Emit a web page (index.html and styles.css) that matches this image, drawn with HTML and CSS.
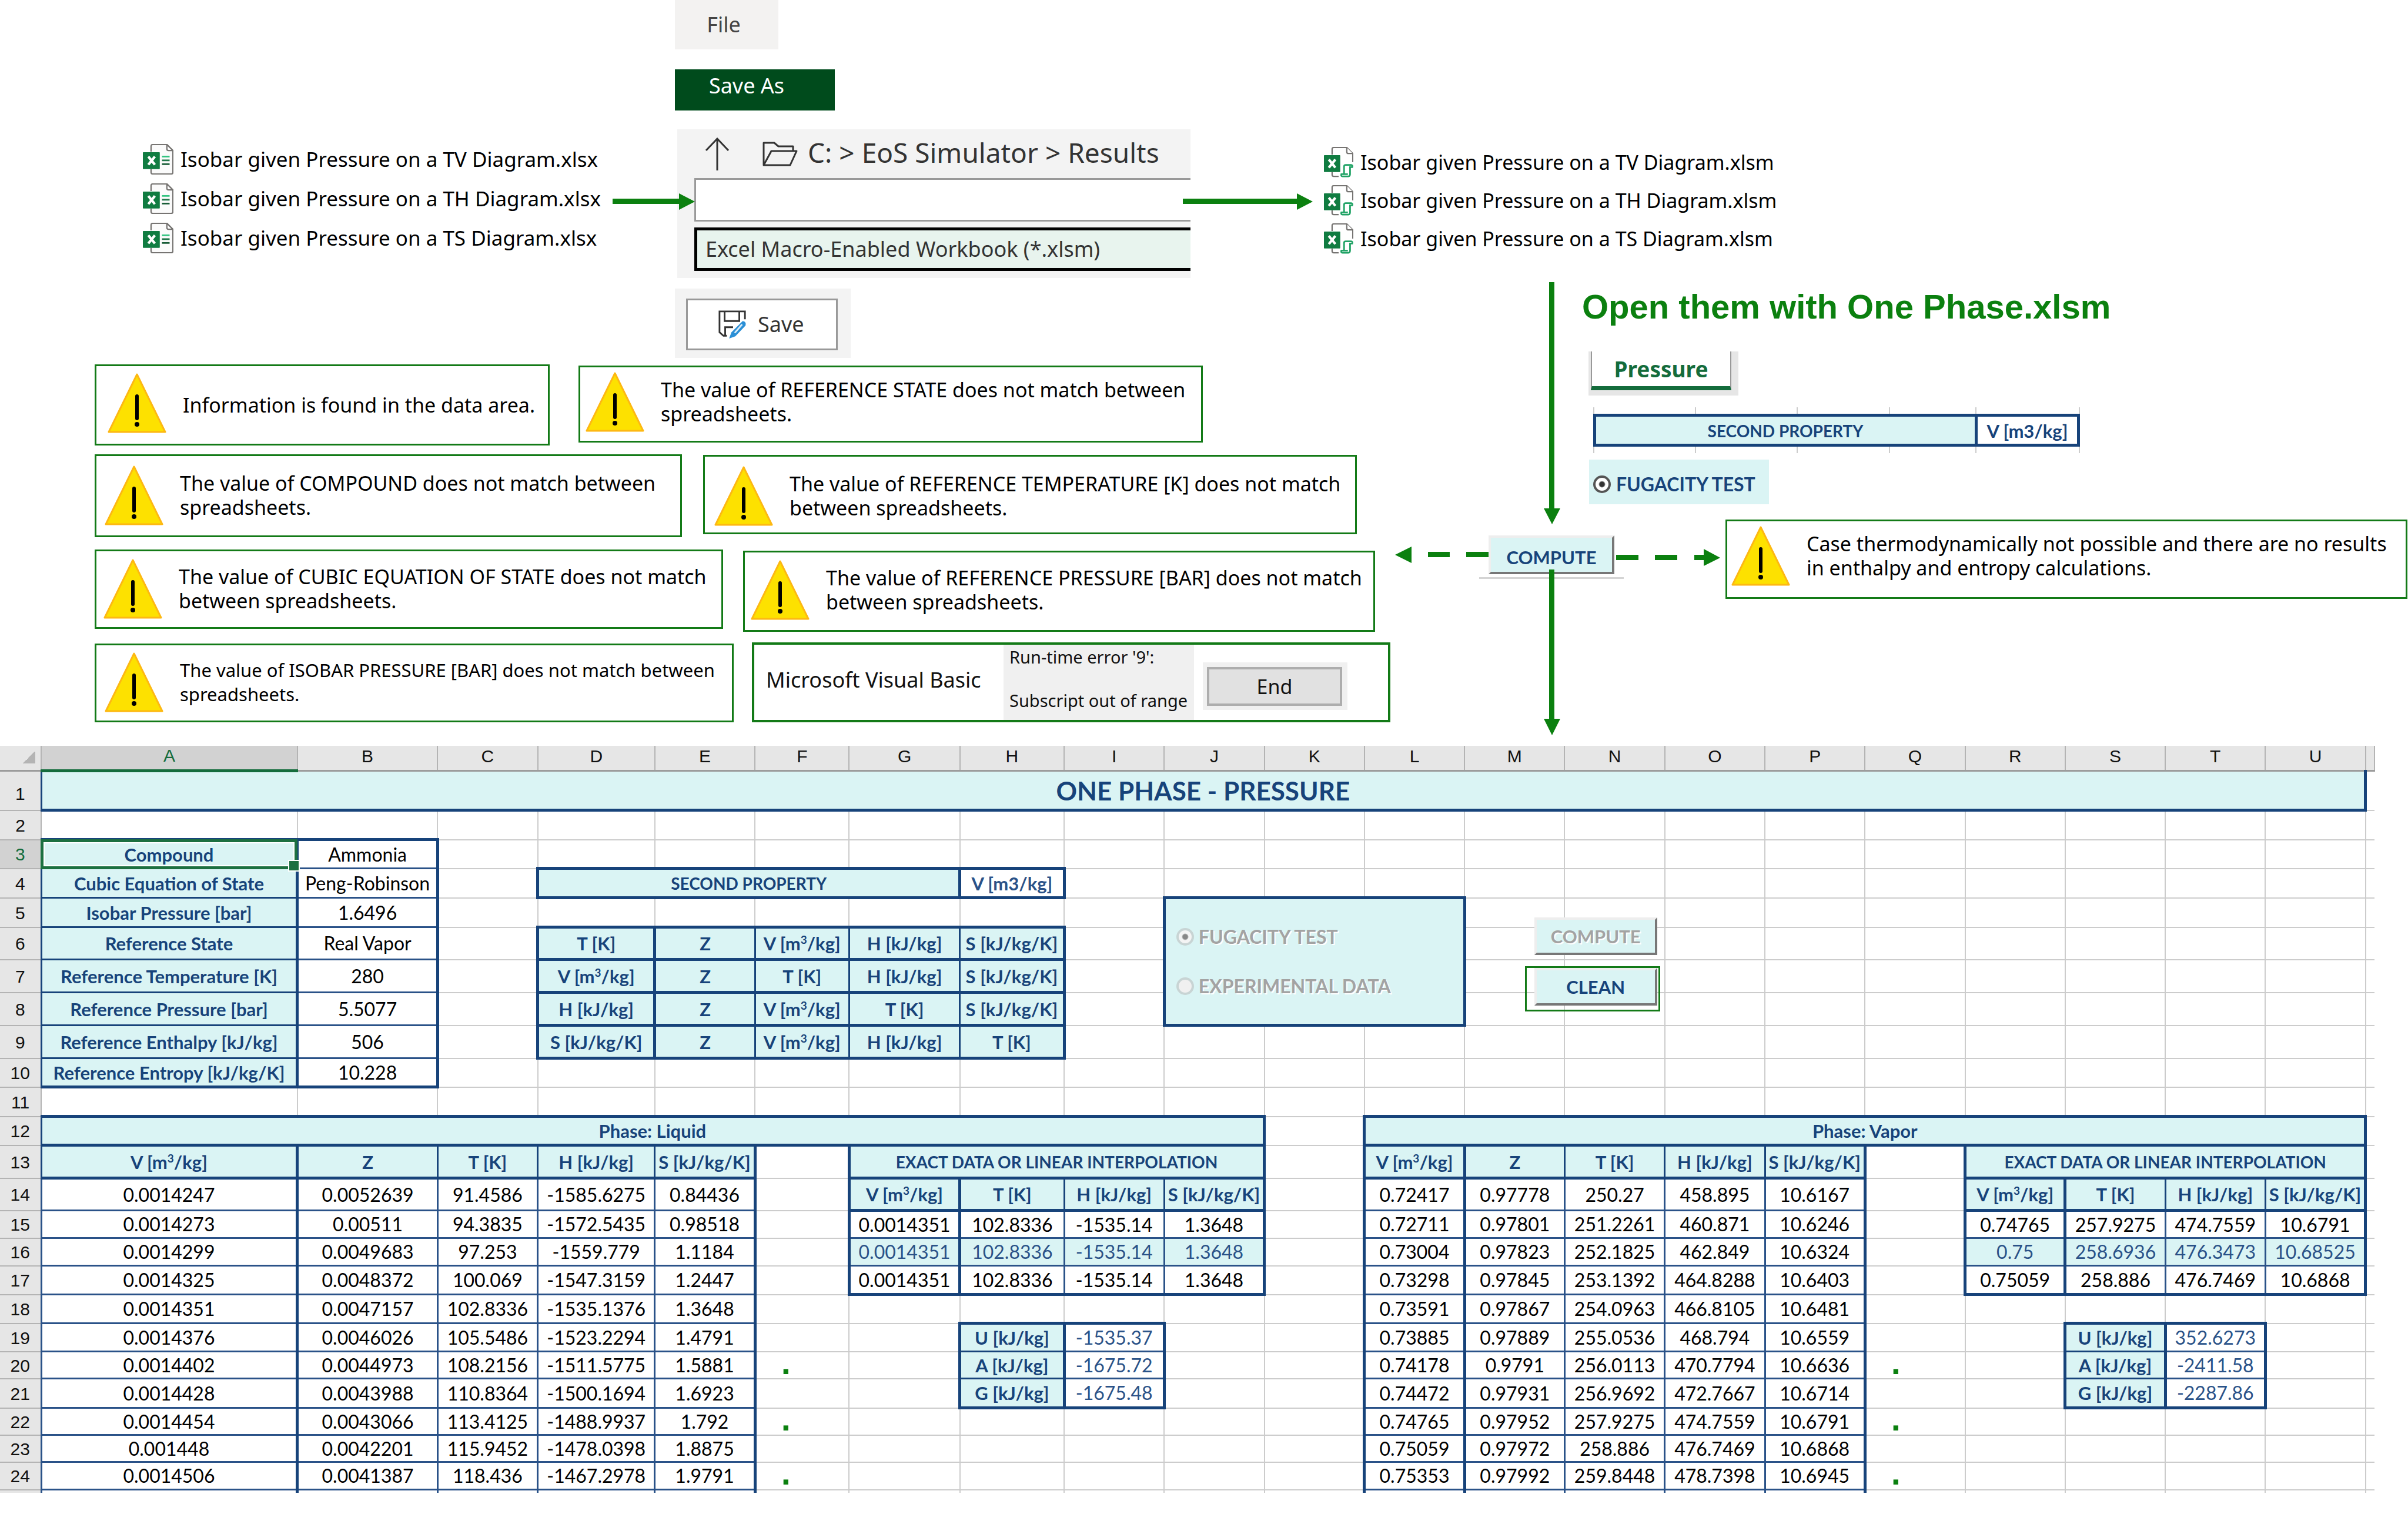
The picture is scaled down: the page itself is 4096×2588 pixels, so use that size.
FILE: index.html
```html
<!DOCTYPE html>
<html lang="en">
<head>
<meta charset="utf-8">
<title>One Phase - Pressure</title>
<link rel="stylesheet" href="styles.css">
</head>
<body>
<svg class="defs" aria-hidden="true">
  <symbol id="warning" viewBox="0 0 100 102">
    <path d="M50 2 L98 100 H2 Z" fill="#fde100" stroke="#fdb813" stroke-width="3" stroke-linejoin="round"/>
    <path d="M50 39 V77" stroke="#000" stroke-width="6" stroke-linecap="round"/>
    <circle cx="50" cy="87" r="4" fill="#000"/>
  </symbol>
  <symbol id="xlsx" viewBox="0 0 56 56">
    <path d="M15 14 V4 Q15 1 18 1 H44 L55 12 V52 Q55 55 52 55 H18 Q15 55 15 52 V46" fill="#fbfbfb" stroke="#767472" stroke-width="2.4"/>
    <path d="M44 1 V9 Q44 12 47 12 H55 Z" fill="#fff" stroke="#767472" stroke-width="2.4"/>
    <path d="M35 23 H49" stroke="#33c481" stroke-width="3"/>
    <path d="M35 30 H49" stroke="#21774a" stroke-width="3"/>
    <path d="M35 37 H49" stroke="#185c37" stroke-width="3"/>
    <rect x="0" y="15" width="31" height="31" rx="1" fill="#107c41"/>
    <path d="M10 23 L22 38 M22 23 L10 38" stroke="#fff" stroke-width="4.6"/>
  </symbol>
  <symbol id="xlsm" viewBox="0 0 54 56">
    <path d="M15 14 V4 Q15 1 18 1 H42 L53 12 V28 M15 46 V51 Q15 54 18 54 H27" fill="none" stroke="#767472" stroke-width="2.4"/>
    <path d="M42 1 V9 Q42 12 45 12 H53" fill="#fff" stroke="#767472" stroke-width="2.4"/>
    <rect x="0" y="15" width="30" height="31" rx="1" fill="#107c41"/>
    <path d="M9 23 L21 38 M21 23 L9 38" stroke="#fff" stroke-width="4.6"/>
    <path d="M37 50 V36 Q37 33 40 33 H50 Q53 33 52 37 H48 V50 Q48 54 45 54 H34 Q31 54 32 50 H44" fill="#fff" stroke="#21a366" stroke-width="3"/>
  </symbol>
</svg>

<main>
<section class="flow" aria-label="Workflow">
  <ul class="files files-in">
    <li><svg><use href="#xlsx"/></svg>Isobar given Pressure on a TV Diagram.xlsx</li>
    <li><svg><use href="#xlsx"/></svg>Isobar given Pressure on a TH Diagram.xlsx</li>
    <li><svg><use href="#xlsx"/></svg>Isobar given Pressure on a TS Diagram.xlsx</li>
  </ul>

  <button class="menu-file" type="button">File</button>
  <button class="menu-save-as" type="button">Save As</button>

  <form class="dialog">
    <div class="path">
      <svg class="up" viewBox="0 0 42 56"><path d="M21 56 V2 M2 22 L21 2 L40 22" fill="none" stroke="#333" stroke-width="3"/></svg>
      <svg class="folder" viewBox="0 0 60 42"><path d="M2 40 V2 H20 L27 8 H52 V16 M2 40 L15 16 H58 L47 40 Z" fill="none" stroke="#333" stroke-width="3" stroke-linejoin="round"/></svg>
      <span>C: &gt; EoS Simulator &gt; Results</span>
    </div>
    <input type="text" class="file-name" aria-label="File name">
    <select class="file-type" aria-label="File type"><option>Excel Macro-Enabled Workbook (*.xlsm)</option></select>
  </form>

  <div class="save-panel">
    <button type="button" class="save">
      <svg viewBox="0 0 52 52"><path d="M16 46 H10 L3 40 V3 H48 V17 M12 3 V20 H38 V3 M13 46 V31 H27" fill="none" stroke="#333" stroke-width="3"/><path d="M44 20 Q51 21 49 28 L31 47 L20 51 L24 40 Z" fill="#2b8fd6"/><path d="M43 26 L30 41" stroke="#d9ecf8" stroke-width="3"/></svg>
      Save
    </button>
  </div>

  <ul class="files files-out">
    <li><svg><use href="#xlsm"/></svg>Isobar given Pressure on a TV Diagram.xlsm</li>
    <li><svg><use href="#xlsm"/></svg>Isobar given Pressure on a TH Diagram.xlsm</li>
    <li><svg><use href="#xlsm"/></svg>Isobar given Pressure on a TS Diagram.xlsm</li>
  </ul>

  <h1 class="open-with">Open them with One Phase.xlsm</h1>

  <div class="sheet-tab"><button type="button">Pressure</button></div>

  <div class="property">
    <span></span><span></span><span></span><span></span><span></span>
    <div class="property-bar"><b>SECOND PROPERTY</b><b class="unit">V [m3/kg]</b></div>
  </div>

  <label class="chip"><input type="radio" name="mode" checked>FUGACITY TEST</label>

  <div class="compute-node"><button type="button" class="bevel">COMPUTE</button></div>

  <div class="warn w-data"><svg><use href="#warning"/></svg><p>Information is found in the data area.</p></div>
  <div class="warn w-state"><svg><use href="#warning"/></svg><p>The value of REFERENCE STATE does not match between<br>spreadsheets.</p></div>
  <div class="warn w-compound"><svg><use href="#warning"/></svg><p>The value of COMPOUND does not match between<br>spreadsheets.</p></div>
  <div class="warn w-temp"><svg><use href="#warning"/></svg><p>The value of REFERENCE TEMPERATURE [K] does not match<br>between spreadsheets.</p></div>
  <div class="warn w-eos"><svg><use href="#warning"/></svg><p>The value of CUBIC EQUATION OF STATE does not match<br>between spreadsheets.</p></div>
  <div class="warn w-press"><svg><use href="#warning"/></svg><p>The value of REFERENCE PRESSURE [BAR] does not match<br>between spreadsheets.</p></div>
  <div class="warn w-isobar"><svg><use href="#warning"/></svg><p>The value of ISOBAR PRESSURE [BAR] does not match between<br>spreadsheets.</p></div>
  <div class="warn w-case"><svg><use href="#warning"/></svg><p>Case thermodynamically not possible and there are no results<br>in enthalpy and entropy calculations.</p></div>

  <div class="runtime">
    <span class="product">Microsoft Visual Basic</span>
    <div class="message"><span>Run-time error '9':</span><span>Subscript out of range</span></div>
    <div class="end"><button type="button">End</button></div>
  </div>

  <svg class="arrows" aria-hidden="true" fill="#0b800f">
    <path d="M1042 338 H1156 V347 H1042 Z M1155 329 L1182 343 L1155 357 Z"/>
    <path d="M2012 338 H2207 V347 H2012 Z M2206 329 L2233 343 L2206 357 Z"/>
    <path d="M2635 480 H2644 V866 H2635 Z M2626 865 H2654 L2640 892 Z"/>
    <path d="M2635 969 H2644 V1224 H2635 Z M2626 1223 H2654 L2640 1251 Z"/>
    <path d="M2373 944 L2401 930 V958 Z M2429 939 H2466 V948 H2429 Z M2494 939 H2532 V948 H2494 Z"/>
    <path d="M2749 944 H2787 V953 H2749 Z M2815 944 H2853 V953 H2815 Z M2882 944 H2898 V934 L2926 949 L2898 963 V953 H2882 Z"/>
  </svg>
</section>

<table class="sheet">
<colgroup>
<col class="c-num"><col class="c-a"><col class="c-b"><col class="c-c"><col class="c-d"><col class="c-e"><col class="c-f"><col class="c-g"><col class="c-h"><col span="13" class="c-std"><col class="c-tail">
</colgroup>
<thead>
<tr><th class="corner"></th><th class="on">A</th><th>B</th><th>C</th><th>D</th><th>E</th><th>F</th><th>G</th><th>H</th><th>I</th><th>J</th><th>K</th><th>L</th><th>M</th><th>N</th><th>O</th><th>P</th><th>Q</th><th>R</th><th>S</th><th>T</th><th>U</th><th></th></tr>
</thead>
<tbody>
<tr class="r67"><th>1</th><td colspan="21" class="h title B R">ONE PHASE - PRESSURE</td><td></td></tr>
<tr class="r50"><th>2</th><td></td><td></td><td></td><td></td><td></td><td></td><td></td><td></td><td></td><td></td><td></td><td></td><td></td><td></td><td></td><td></td><td></td><td></td><td></td><td></td><td></td><td></td></tr>
<tr class="r49"><th class="on">3</th><td class="h T R picked">Compound<i class="cursor"></i></td><td class="d T R">Ammonia</td><td></td><td></td><td></td><td></td><td></td><td></td><td></td><td></td><td></td><td></td><td></td><td></td><td></td><td></td><td></td><td></td><td></td><td></td><td></td><td></td></tr>
<tr class="r50"><th>4</th><td class="h R">Cubic Equation of State</td><td class="d R">Peng-Robinson</td><td></td><td colspan="4" class="h caps T R B L">SECOND PROPERTY</td><td class="d n m T R B">V [m3/kg]</td><td></td><td></td><td></td><td></td><td></td><td></td><td></td><td></td><td></td><td></td><td></td><td></td><td></td><td></td></tr>
<tr class="r50"><th>5</th><td class="h R">Isobar Pressure [bar]</td><td class="d R">1.6496</td><td></td><td></td><td></td><td></td><td></td><td></td><td></td>
<td colspan="3" rowspan="4" class="h T R B L"><div class="modes"><label><input type="radio" name="sheet-mode" checked disabled>FUGACITY TEST</label><label><input type="radio" name="sheet-mode" disabled>EXPERIMENTAL DATA</label></div></td>
<td class="anchor"><div class="actions"><button type="button" class="bevel" disabled>COMPUTE</button><span class="ring"><button type="button" class="bevel">CLEAN</button></span></div></td><td></td><td></td><td></td><td></td><td></td><td></td><td></td><td></td><td></td></tr>
<tr class="r55"><th>6</th><td class="h R">Reference State</td><td class="d R">Real Vapor</td><td></td><td class="h T R B L">T [K]</td><td class="h T B">Z</td><td class="h T B">V [m<sup>3</sup>/kg]</td><td class="h T B">H [kJ/kg]</td><td class="h T R B">S [kJ/kg/K]</td><td></td><td></td><td></td><td></td><td></td><td></td><td></td><td></td><td></td><td></td><td></td></tr>
<tr class="r56"><th>7</th><td class="h R">Reference Temperature [K]</td><td class="d R">280</td><td></td><td class="h R B L">V [m<sup>3</sup>/kg]</td><td class="h B">Z</td><td class="h B">T [K]</td><td class="h B">H [kJ/kg]</td><td class="h R B">S [kJ/kg/K]</td><td></td><td></td><td></td><td></td><td></td><td></td><td></td><td></td><td></td><td></td><td></td></tr>
<tr class="r56"><th>8</th><td class="h R">Reference Pressure [bar]</td><td class="d R">5.5077</td><td></td><td class="h R B L">H [kJ/kg]</td><td class="h B">Z</td><td class="h B">V [m<sup>3</sup>/kg]</td><td class="h B">T [K]</td><td class="h R B">S [kJ/kg/K]</td><td></td><td></td><td></td><td></td><td></td><td></td><td></td><td></td><td></td><td></td><td></td></tr>
<tr class="r56"><th>9</th><td class="h R">Reference Enthalpy [kJ/kg]</td><td class="d R">506</td><td></td><td class="h R B L">S [kJ/kg/K]</td><td class="h B">Z</td><td class="h B">V [m<sup>3</sup>/kg]</td><td class="h B">H [kJ/kg]</td><td class="h R B">T [K]</td><td></td><td></td><td></td><td></td><td></td><td></td><td></td><td></td><td></td><td></td><td></td><td></td><td></td><td></td></tr>
<tr class="r49"><th>10</th><td class="h R B">Reference Entropy [kJ/kg/K]</td><td class="d R B">10.228</td><td></td><td></td><td></td><td></td><td></td><td></td><td></td><td></td><td></td><td></td><td></td><td></td><td></td><td></td><td></td><td></td><td></td><td></td><td></td><td></td></tr>
<tr class="r50"><th>11</th><td></td><td></td><td></td><td></td><td></td><td></td><td></td><td></td><td></td><td></td><td></td><td></td><td></td><td></td><td></td><td></td><td></td><td></td><td></td><td></td><td></td><td></td></tr>
<tr class="r49"><th>12</th><td colspan="10" class="h T R B">Phase: Liquid</td><td></td><td colspan="10" class="h T R B L">Phase: Vapor</td><td></td></tr>
<tr class="r56"><th>13</th><td class="h R B">V [m<sup>3</sup>/kg]</td><td class="h B">Z</td><td class="h B">T [K]</td><td class="h B">H [kJ/kg]</td><td class="h R B">S [kJ/kg/K]</td><td></td><td colspan="4" class="h caps R B L">EXACT DATA OR LINEAR INTERPOLATION</td><td></td><td class="h R B L">V [m<sup>3</sup>/kg]</td><td class="h B">Z</td><td class="h B">T [K]</td><td class="h B">H [kJ/kg]</td><td class="h R B">S [kJ/kg/K]</td><td></td><td colspan="4" class="h caps R B L">EXACT DATA OR LINEAR INTERPOLATION</td><td></td></tr>
<tr class="r55"><th>14</th><td class="d R">0.0014247</td><td class="d">0.0052639</td><td class="d">91.4586</td><td class="d">-1585.6275</td><td class="d R">0.84436</td><td></td><td class="h R B L">V [m<sup>3</sup>/kg]</td><td class="h B">T [K]</td><td class="h B">H [kJ/kg]</td><td class="h R B">S [kJ/kg/K]</td><td></td><td class="d R L">0.72417</td><td class="d">0.97778</td><td class="d">250.27</td><td class="d">458.895</td><td class="d R">10.6167</td><td></td><td class="h R B L">V [m<sup>3</sup>/kg]</td><td class="h B">T [K]</td><td class="h B">H [kJ/kg]</td><td class="h R B">S [kJ/kg/K]</td><td></td></tr>
<tr class="r47"><th>15</th><td class="d R">0.0014273</td><td class="d">0.00511</td><td class="d">94.3835</td><td class="d">-1572.5435</td><td class="d R">0.98518</td><td></td><td class="d R L">0.0014351</td><td class="d">102.8336</td><td class="d">-1535.14</td><td class="d R">1.3648</td><td></td><td class="d R L">0.72711</td><td class="d">0.97801</td><td class="d">251.2261</td><td class="d">460.871</td><td class="d R">10.6246</td><td></td><td class="d R L">0.74765</td><td class="d">257.9275</td><td class="d">474.7559</td><td class="d R">10.6791</td><td></td></tr>
<tr class="r47"><th>16</th><td class="d R">0.0014299</td><td class="d">0.0049683</td><td class="d">97.253</td><td class="d">-1559.779</td><td class="d R">1.1184</td><td></td><td class="d n f R L">0.0014351</td><td class="d n f">102.8336</td><td class="d n f">-1535.14</td><td class="d n f R">1.3648</td><td></td><td class="d R L">0.73004</td><td class="d">0.97823</td><td class="d">252.1825</td><td class="d">462.849</td><td class="d R">10.6324</td><td></td><td class="d n f R L">0.75</td><td class="d n f">258.6936</td><td class="d n f">476.3473</td><td class="d n f R">10.68525</td><td></td></tr>
<tr class="r49"><th>17</th><td class="d R">0.0014325</td><td class="d">0.0048372</td><td class="d">100.069</td><td class="d">-1547.3159</td><td class="d R">1.2447</td><td></td><td class="d R B L">0.0014351</td><td class="d B">102.8336</td><td class="d B">-1535.14</td><td class="d R B">1.3648</td><td></td><td class="d R L">0.73298</td><td class="d">0.97845</td><td class="d">253.1392</td><td class="d">464.8288</td><td class="d R">10.6403</td><td></td><td class="d R B L">0.75059</td><td class="d B">258.886</td><td class="d B">476.7469</td><td class="d R B">10.6868</td><td></td></tr>
<tr class="r49"><th>18</th><td class="d R">0.0014351</td><td class="d">0.0047157</td><td class="d">102.8336</td><td class="d">-1535.1376</td><td class="d R">1.3648</td><td></td><td></td><td></td><td></td><td></td><td></td><td class="d R L">0.73591</td><td class="d">0.97867</td><td class="d">254.0963</td><td class="d">466.8105</td><td class="d R">10.6481</td><td></td><td></td><td></td><td></td><td></td><td></td></tr>
<tr class="r48"><th>19</th><td class="d R">0.0014376</td><td class="d">0.0046026</td><td class="d">105.5486</td><td class="d">-1523.2294</td><td class="d R">1.4791</td><td></td><td></td><td class="h T R L">U [kJ/kg]</td><td class="d n T R">-1535.37</td><td></td><td></td><td class="d R L">0.73885</td><td class="d">0.97889</td><td class="d">255.0536</td><td class="d">468.794</td><td class="d R">10.6559</td><td></td><td></td><td class="h T R L">U [kJ/kg]</td><td class="d n T R">352.6273</td><td></td><td></td></tr>
<tr class="r46"><th>20</th><td class="d R">0.0014402</td><td class="d">0.0044973</td><td class="d">108.2156</td><td class="d">-1511.5775</td><td class="d R">1.5881</td><td class="dot">.</td><td></td><td class="h R L">A [kJ/kg]</td><td class="d n R">-1675.72</td><td></td><td></td><td class="d R L">0.74178</td><td class="d">0.9791</td><td class="d">256.0113</td><td class="d">470.7794</td><td class="d R">10.6636</td><td class="dot">.</td><td></td><td class="h R L">A [kJ/kg]</td><td class="d n R">-2411.58</td><td></td><td></td></tr>
<tr class="r50"><th>21</th><td class="d R">0.0014428</td><td class="d">0.0043988</td><td class="d">110.8364</td><td class="d">-1500.1694</td><td class="d R">1.6923</td><td></td><td></td><td class="h R B L">G [kJ/kg]</td><td class="d n R B">-1675.48</td><td></td><td></td><td class="d R L">0.74472</td><td class="d">0.97931</td><td class="d">256.9692</td><td class="d">472.7667</td><td class="d R">10.6714</td><td></td><td></td><td class="h R B L">G [kJ/kg]</td><td class="d n R B">-2287.86</td><td></td><td></td></tr>
<tr class="r46"><th>22</th><td class="d R">0.0014454</td><td class="d">0.0043066</td><td class="d">113.4125</td><td class="d">-1488.9937</td><td class="d R">1.792</td><td class="dot">.</td><td></td><td></td><td></td><td></td><td></td><td class="d R L">0.74765</td><td class="d">0.97952</td><td class="d">257.9275</td><td class="d">474.7559</td><td class="d R">10.6791</td><td class="dot">.</td><td></td><td></td><td></td><td></td><td></td></tr>
<tr class="r46"><th>23</th><td class="d R">0.001448</td><td class="d">0.0042201</td><td class="d">115.9452</td><td class="d">-1478.0398</td><td class="d R">1.8875</td><td></td><td></td><td></td><td></td><td></td><td></td><td class="d R L">0.75059</td><td class="d">0.97972</td><td class="d">258.886</td><td class="d">476.7469</td><td class="d R">10.6868</td><td></td><td></td><td></td><td></td><td></td><td></td></tr>
<tr class="r47"><th>24</th><td class="d R">0.0014506</td><td class="d">0.0041387</td><td class="d">118.436</td><td class="d">-1467.2978</td><td class="d R">1.9791</td><td class="dot">.</td><td></td><td></td><td></td><td></td><td></td><td class="d R L">0.75353</td><td class="d">0.97992</td><td class="d">259.8448</td><td class="d">478.7398</td><td class="d R">10.6945</td><td class="dot">.</td><td></td><td></td><td></td><td></td><td></td></tr>
<tr class="cut"><th></th><td class="d R"></td><td class="d"></td><td class="d"></td><td class="d"></td><td class="d R"></td><td></td><td></td><td></td><td></td><td></td><td></td><td class="d R L"></td><td class="d"></td><td class="d"></td><td class="d"></td><td class="d R"></td><td></td><td></td><td></td><td></td><td></td><td></td></tr>
</tbody>
</table>
</main>
</body>
</html>
```
FILE: styles.css
```css
:root {
  --green: #0b800f;
  --navy: #17437a;
  --aqua: #daf4f4;
  --ui: "Noto Sans", "Open Sans", sans-serif;
  --cell: Lato, "Open Sans", sans-serif;
}

* { box-sizing: border-box; }

body {
  margin: 0;
  background: #fff;
  color: #111;
  font-family: var(--ui);
  font-size: 34px;
  line-height: 42px;
}

button, input, select {
  margin: 0;
  padding: 0;
  border: 0;
  border-radius: 0;
  font: inherit;
  color: inherit;
}

p, ul, h1 { margin: 0; padding: 0; }

.defs { position: absolute; width: 0; height: 0; }

/* Workflow canvas: every direct child is a node placed on it */
.flow { position: relative; height: 1269px; }
.flow > * { position: absolute; }
.arrows { left: 0; top: 0; width: 100%; height: 100%; pointer-events: none; }

.files { list-style: none; white-space: nowrap; color: #000; }
.files li { display: flex; align-items: center; gap: 12px; }
.files-in { left: 243px; top: 237px; font-size: 35px; }
.files-in li { height: 67px; }
.files-in svg { width: 52px; height: 52px; }
.files-out { left: 2252px; top: 243px; }
.files-out li { height: 65px; }
.files-out svg { width: 50px; height: 52px; }

.menu-file {
  left: 1148px; top: 0;
  width: 176px; height: 84px;
  padding-right: 10px;
  background: #f3f2f1;
  color: #444;
  font-size: 36px;
}
.menu-save-as {
  left: 1148px; top: 118px;
  width: 272px; height: 70px;
  padding: 0 28px 14px 0;
  background: #004b1c;
  color: #fff;
  font-size: 36px;
}

.dialog {
  left: 1152px; top: 220px;
  width: 873px; height: 253px;
  padding: 10px 0 12px 29px;
  display: flex;
  flex-direction: column;
  background: #f3f3f3;
  color: #333;
}
.path {
  display: flex;
  align-items: center;
  height: 63px;
  margin-bottom: 10px;
  padding-left: 18px;
  font-size: 46px;
  white-space: nowrap;
}
.path span { padding-bottom: 6px; }
.up { width: 42px; height: 56px; margin-right: 56px; }
.folder { width: 60px; height: 42px; margin-right: 17px; }
.file-name {
  height: 74px;
  margin-bottom: 10px;
  border: 3px solid #999;
  border-right: 0;
  background: #fff;
}
.file-type {
  height: 74px;
  padding-left: 14px;
  border: 5px solid #000;
  border-right: 0;
  background: #e8f4ee;
  color: #333;
  font-size: 36px;
  appearance: none;
}

.save-panel {
  left: 1148px; top: 491px;
  width: 299px; height: 118px;
  padding: 17px 22px 13px 19px;
  background: #f3f3f3;
}
.save {
  display: flex;
  align-items: center;
  gap: 18px;
  width: 100%; height: 88px;
  padding-left: 51px;
  border: 3px solid #999;
  background: #fff;
  color: #333;
  font-size: 36px;
}
.save svg { width: 50px; height: 50px; }

.open-with {
  left: 2691px; top: 490px;
  color: var(--green);
  font: bold 58px/64px "Liberation Sans", Arial, sans-serif;
  white-space: nowrap;
}

.sheet-tab {
  left: 2702px; top: 598px;
  width: 255px; height: 75px;
  padding: 0 12px 9px 4px;
  background: #e6e6e6;
}
.sheet-tab button {
  width: 100%; height: 66px;
  border: 2px solid #999;
  border-top: 0;
  border-bottom: 7px solid #146c3c;
  background: #fff;
  color: #146c3c;
  font-size: 37px;
  font-weight: bold;
}

/* Sheet fragment: grid stubs show above and below the bar */
.property {
  left: 2710px; top: 693px;
  width: 828px; height: 78px;
  display: grid;
  grid-template-columns: 173px 173px 157px 147px 1fr;
}
.property > span { grid-row: 1; border-left: 2px solid #ccc; }
.property > span:nth-child(1) { grid-column: 1; }
.property > span:nth-child(2) { grid-column: 2; }
.property > span:nth-child(3) { grid-column: 3; }
.property > span:nth-child(4) { grid-column: 4; }
.property > span:nth-child(5) { grid-column: 5; border-right: 2px solid #ccc; }
.property-bar {
  grid-row: 1;
  grid-column: 1 / -1;
  align-self: center;
  display: flex;
  height: 56px;
  border: 5px solid var(--navy);
  background: #fff;
  color: var(--navy);
  font: 28px/48px var(--cell);
  text-align: center;
}
.property-bar b { flex: 1; background: var(--aqua); }
.property-bar .unit {
  flex: none;
  width: 174px;
  border-left: 5px solid var(--navy);
  background: #fff;
  font-size: 31px;
}

.chip {
  left: 2703px; top: 782px;
  width: 306px; height: 76px;
  padding: 8px 0 0 7px;
  display: flex;
  align-items: center;
  gap: 9px;
  background: var(--aqua);
  color: var(--navy);
  font: bold 32px/40px var(--cell);
  white-space: nowrap;
}

input[type="radio"] {
  appearance: none;
  flex: none;
  width: 30px; height: 30px;
  border: 4px solid #555;
  border-radius: 50%;
  background: #fff;
}
input[type="radio"]:checked { background: radial-gradient(circle, #333 0 4px, #fff 6px); }
input[type="radio"]:disabled { border-color: #c8d4d4; background: #f0f0f0; }
input[type="radio"]:checked:disabled { background: radial-gradient(circle, #888 0 4px, #f4f4f4 6px); }

.bevel {
  border-style: solid;
  border-width: 4px;
  border-color: #eee #777 #777 #eee;
  background: var(--aqua);
  color: var(--navy);
  font: bold 31px/40px var(--cell);
}
.bevel:disabled { color: #a3a3a3; text-shadow: 2px 2px #fff; }

.compute-node {
  left: 2516px; top: 903px;
  width: 246px; height: 82px;
  padding: 8px 16px;
  border-bottom: 3px solid #d4d4d4;
}
.compute-node .bevel { width: 100%; height: 66px; padding-top: 8px; }

.warn {
  display: flex;
  align-items: flex-start;
  gap: 28px;
  border: 3px solid #137a17;
  background: #fff;
  color: #000;
  line-height: 41px;
  white-space: nowrap;
}
.warn svg { flex: none; width: 100px; height: 102px; }
.warn p { padding-top: 10px; }
.w-data { left: 161px; top: 620px; width: 774px; height: 138px; padding: 12px 0 0 19px; }
.w-data p { padding-top: 34px; }
.w-state { left: 984px; top: 622px; width: 1062px; height: 131px; padding: 8px 0 0 9px; }
.w-compound { left: 161px; top: 773px; width: 999px; height: 141px; padding: 16px 0 0 14px; }
.w-temp { left: 1196px; top: 774px; width: 1112px; height: 135px; padding: 16px 0 0 16px; }
.w-eos { left: 161px; top: 935px; width: 1069px; height: 135px; padding: 13px 0 0 12px; }
.w-press { left: 1264px; top: 937px; width: 1075px; height: 138px; padding: 13px 0 0 10px; }
.w-isobar { left: 161px; top: 1095px; width: 1087px; height: 134px; padding: 12px 0 0 14px; font-size: 31px; }
.w-case { left: 2935px; top: 884px; width: 1160px; height: 135px; padding: 8px 0 0 7px; }

.runtime {
  left: 1279px; top: 1093px;
  width: 1086px; height: 136px;
  padding-left: 20px;
  display: flex;
  align-items: center;
  border: 4px solid #137a17;
  background: #fff;
  white-space: nowrap;
}
.product { width: 404px; font-size: 36px; padding-bottom: 8px; }
.message {
  align-self: stretch;
  display: flex;
  flex-direction: column;
  justify-content: space-between;
  width: 324px;
  padding: 0 10px 12px;
  background: #f0f0f0;
  font-size: 29px;
}
.end { margin: 12px 0 0 15px; padding: 8px 9px 7px 7px; background: #f0f0f0; }
.end button {
  display: block;
  width: 230px; height: 66px;
  border: 4px solid #adadad;
  background: #e1e1e1;
}

/* Spreadsheet */
.sheet {
  width: calc(100% - 56px);
  table-layout: fixed;
  border-collapse: collapse;
  font: 32px/36px var(--cell);
  text-align: center;
  white-space: nowrap;
}
.c-num { width: 70px; }
.c-a { width: 435px; }
.c-b { width: 238px; }
.c-c { width: 170px; }
.c-d { width: 199px; }
.c-e { width: 170px; }
.c-f { width: 160px; }
.c-g { width: 188px; }
.c-h { width: 177px; }
.c-std { width: 170px; }
.c-tail { width: 15px; }

.sheet th {
  padding: 2px 0 0;
  background: #e6e6e6;
  border: 2px solid #b4b4b4;
  border-left: 0;
  color: #111;
  font: 30px/34px "Liberation Sans", Arial, sans-serif;
}
.sheet thead tr { height: 42px; }
.sheet thead th { padding: 0 0 6px; border-top: 0; border-bottom: 3px solid #9c9c9c; }
.sheet .r67 th { padding-top: 12px; }
.sheet th.on { background: #d2d2d2; color: #146c3c; }
.sheet thead th.on { border-bottom: 5px solid #146c3c; }
.sheet .corner { background: linear-gradient(135deg, transparent 50%, #b4b4b4 50%) 38px 10px / 22px 20px no-repeat #e6e6e6; }

.sheet td { padding: 0; border: 2px solid #ccc; overflow: visible; }
.sheet td:last-child { border-right: 0; }
.sheet td.h {
  background: var(--aqua);
  border: 3px solid var(--navy);
  color: var(--navy);
  font-size: 31px;
  font-weight: bold;
}
.sheet td.d { border: 3px solid #2a5288; color: #000; }
.sheet td.n { color: #2a5288; }
.sheet td.m { font-size: 31px; font-weight: bold; }
.sheet td.f { background: var(--aqua); }
.sheet td.T { border-top: 5px solid var(--navy); }
.sheet td.R { border-right: 5px solid var(--navy); }
.sheet td.B { border-bottom: 5px solid var(--navy); }
.sheet td.L { border-left: 5px solid var(--navy); }
.sheet td.title { font-size: 44px; }
.sheet td.caps { font-size: 28px; }
.sheet sup { font-size: 19px; line-height: 0; }

.r46 { height: 46px; }
.r47 { height: 47px; }
.r48 { height: 48px; }
.r49 { height: 49px; }
.r50 { height: 50px; }
.r55 { height: 55px; }
.r56 { height: 56px; }
.r67 { height: 67px; }
.cut { height: 5px; }
.sheet .cut td, .sheet .cut th { border-bottom: 0; }

.picked, .anchor { position: relative; }
.cursor {
  position: absolute;
  inset: -3px;
  border: 5px solid #1c7040;
  box-shadow: inset 0 0 0 2px #fff;
}
.cursor::after {
  content: "";
  position: absolute;
  right: -9px; bottom: -9px;
  width: 16px; height: 16px;
  border: 2px solid #fff;
  background: #1c7040;
}

.modes { display: flex; flex-direction: column; gap: 44px; padding-left: 18px; }
.modes label {
  display: flex;
  align-items: center;
  gap: 8px;
  height: 40px;
  color: #a3a3a3;
  font-size: 32px;
  text-shadow: 2px 2px #fff;
}

.actions { position: absolute; left: 100px; top: 32px; z-index: 1; width: 230px; }
.actions .bevel { display: block; width: 209px; height: 64px; margin-left: 16px; }
.ring { display: block; height: 77px; margin-top: 19px; border: 3px solid #137a17; }
.ring .bevel { margin-left: 13px; }

.sheet td.dot {
  padding-left: 42px;
  vertical-align: top;
  text-align: left;
  color: var(--green);
  font: bold 58px/34px "Liberation Sans", Arial, sans-serif;
}
```
